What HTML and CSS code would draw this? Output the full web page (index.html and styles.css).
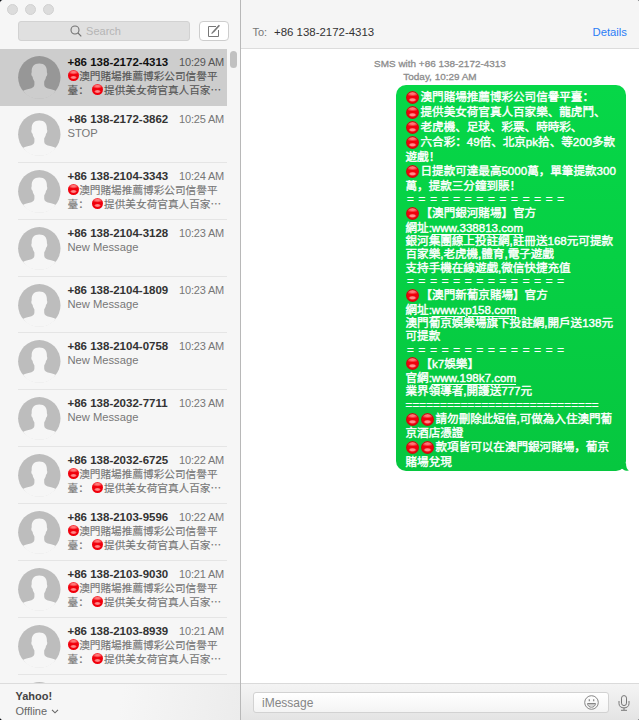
FILE: index.html
```html
<!DOCTYPE html>
<html lang="zh-Hans">
<head>
    <meta charset="utf-8">
    <title>Messages</title>
    <link rel="stylesheet" href="styles.css">
</head>
<body>
    <svg width="0" height="0" class="defs">
        <symbol id="avatar" viewBox="0 0 43 43">
            <circle class="disc" cx="21.3" cy="21.3" r="21.2"/>
            <path class="person" d="M21.3 7.6C26.6 7.6 29.2 10.6 28.9 16.2C29.7 17.4 29.2 20.2 28 20.8C27.7 23.3 26.8 24.4 26.2 25.4V28.4C26.2 31 28.2 31.9 31 32.7C34 33.5 36 34 37.6 34.9C33.6 40.1 27.8 42.8 21.3 42.8C14.8 42.8 9 40.1 5 34.9C6.6 34 8.6 33.5 11.6 32.7C14.4 31.9 16.4 31 16.4 28.4V25.4C15.8 24.4 14.9 23.3 14.6 20.8C13.4 20.2 12.9 17.4 13.7 16.2C13.4 10.6 16 7.6 21.3 7.6Z"/>
        </symbol>
    </svg>
    <div class="window">
        <div class="sidebar">
            <div class="sidebar-top">
                <div class="lights"><i></i><i></i><i></i></div>
                <div class="tools">
                    <div class="search">
                        <svg width="12" height="12" viewBox="0 0 12 12" fill="none" stroke="#727272" stroke-width="1.1"><circle cx="5" cy="5" r="4"/><path d="M8 8L11.3 11.3"/></svg>
                        <span>Search</span>
                    </div>
                    <div class="compose">
                        <svg width="14" height="14" viewBox="0 0 14 14" fill="none" stroke="#777" stroke-width="1"><path d="M9 2.5H1.5V12.5H11.5V6"/><path d="M6 8.2L12.4 1.2" stroke-width="1.7"/><path d="M4.6 9.6L6 8.2" stroke-width="1.2"/></svg>
                    </div>
                </div>
            </div>
            <div class="list-wrap">
                <div class="list" id="list"></div>
                <div class="scrollbar"></div>
            </div>
            <div class="account">
                <div class="account-name">Yahoo!</div>
                <div class="status">Offline <svg width="8" height="5" viewBox="0 0 8 5" fill="none" stroke="#666" stroke-width="1.1"><path d="M1 .8L4 3.8L7 .8"/></svg></div>
            </div>
        </div>

        <div class="chat">
            <div class="chat-header">
                <span class="to">To:</span>
                <span class="recipient">+86 138-2172-4313</span>
                <span class="details">Details</span>
            </div>
            <div class="messages">
                <div class="stamp">SMS with +86 138-2172-4313</div>
                <div class="stamp">Today, 10:29 AM</div>
                <div class="bubble">
                    <div class="line tall"><i class="ball"></i>澳門賭場推薦博彩公司信譽平臺：</div>
                    <div class="line tall"><i class="ball"></i>提供美女荷官真人百家樂、龍虎鬥、</div>
                    <div class="line tall"><i class="ball"></i>老虎機、足球、彩票、時時彩、</div>
                    <div class="line tall"><i class="ball"></i>六合彩：49倍、北京pk拾、等200多款</div>
                    <div class="line mid">遊戲！</div>
                    <div class="line tall"><i class="ball"></i>日提款可達最高5000萬，單筆提款300</div>
                    <div class="line mid">萬，提款三分鐘到賬！</div>
                    <div class="line rule">= = = = = = = = = = = = = =</div>
                    <div class="line title"><i class="ball"></i>【澳門銀河賭場】官方</div>
                    <div class="line mid">網址:<u>www.338813.com</u></div>
                    <div class="line">銀河集團線上投註網,註冊送168元可提款</div>
                    <div class="line">百家樂,老虎機,體育,電子遊戲</div>
                    <div class="line">支持手機在線遊戲,微信快捷充值</div>
                    <div class="line rule">= = = = = = = = = = = = = =</div>
                    <div class="line title"><i class="ball"></i>【澳門新葡京賭場】官方</div>
                    <div class="line mid">網址:<u>www.xp158.com</u></div>
                    <div class="line">澳門葡京娛樂場旗下投註網,開戶送138元</div>
                    <div class="line">可提款</div>
                    <div class="line rule">= = = = = = = = = = = = = =</div>
                    <div class="line title"><i class="ball"></i>【k7娛樂】</div>
                    <div class="line mid">官網:<u>www.198k7.com</u></div>
                    <div class="line">業界領導者,開護送777元</div>
                    <div class="line dashes">============================</div>
                    <div class="line title"><i class="ball"></i><i class="ball"></i>請勿刪除此短信,可做為入住澳門葡</div>
                    <div class="line">京酒店憑證</div>
                    <div class="line title"><i class="ball"></i><i class="ball"></i>款項皆可以在澳門銀河賭場，葡京</div>
                    <div class="line mid">賭場兌現</div>
                    <svg class="tail" width="10" height="8" viewBox="0 0 10 8"><path d="M7 0C7 4 8 6.5 10 7.6C8 8 5.5 7.6 4 6.2L0 4Z" fill="#06c73f"/></svg>
                </div>
            </div>
            <div class="composer">
                <div class="field">
                    <span>iMessage</span>
                    <svg width="15" height="15" viewBox="0 0 15 15" fill="none" stroke="#858585"><circle cx="7.5" cy="7.5" r="6.8"/><path d="M3.5 8.5H11.5C11.2 11 9.6 12.2 7.5 12.2S3.8 11 3.5 8.5Z"/><path d="M4.4 9.9H10.6" stroke-width=".7"/><path d="M5.3 4.2V6.2M9.7 4.2V6.2" stroke-width="1.2"/></svg>
                </div>
                <svg class="mic" width="12" height="16" viewBox="0 0 12 16" fill="none" stroke="#777"><rect x="3.5" y=".6" width="5" height="10" rx="2.5"/><path d="M1 6V8.6C1 11.4 3.2 12.9 6 12.9S11 11.4 11 8.6V6M6 13V15M3 15.3H9"/></svg>
            </div>
        </div>
    </div>

    <script>
        const ad = '<i class="ball"></i>澳門賭場推薦博彩公司信譽平<br>臺：<i class="ball second"></i>提供美女荷官真人百家⋯';
        const threads = [
            ['+86 138-2172-4313', '10:29 AM', ad],
            ['+86 138-2172-3862', '10:25 AM', 'STOP'],
            ['+86 138-2104-3343', '10:24 AM', ad],
            ['+86 138-2104-3128', '10:23 AM', 'New Message'],
            ['+86 138-2104-1809', '10:23 AM', 'New Message'],
            ['+86 138-2104-0758', '10:23 AM', 'New Message'],
            ['+86 138-2032-7711', '10:23 AM', 'New Message'],
            ['+86 138-2032-6725', '10:22 AM', ad],
            ['+86 138-2103-9596', '10:22 AM', ad],
            ['+86 138-2103-9030', '10:21 AM', ad],
            ['+86 138-2103-8939', '10:21 AM', ad],
            ['', '', '']
        ];
        document.getElementById('list').innerHTML = threads.map((t, i) => `
            <div class="thread${i === 0 ? ' selected' : ''}">
                <svg class="avatar"><use href="#avatar"/></svg>
                <div class="info">
                    <div class="top"><b>${t[0]}</b><span>${t[1]}</span></div>
                    <div class="preview">${t[2]}</div>
                </div>
            </div>`).join('');
    </script>
</body>
</html>
```
FILE: styles.css
```css
* {
    box-sizing: border-box;
}
body {
    margin: 0;
    height: 720px;
    overflow: hidden;
    background-color: #15181c;
    font-family: "Liberation Sans", "Noto Sans CJK SC", sans-serif;
    font-size: 11.5px;
    text-spacing-trim: space-all;
}
.defs {
    display: block;
}
.window {
    display: flex;
    width: 639px;
    height: 720px;
    overflow: hidden;
    border-radius: 4px 2px 2px 4px;
    background-color: #fff;
}
.sidebar {
    display: flex;
    flex-direction: column;
    width: 241px;
    background-color: #f6f6f6;
    border-right: 1px solid #b8b8b8;
}
.sidebar-top {
    height: 49px;
    flex: none;
}
.lights {
    display: flex;
    gap: 6.8px;
    padding: 4px 0 0 7px;
}
.lights i {
    width: 11px;
    height: 11px;
    border-radius: 50%;
    background-color: #dcdcdc;
    border: 1px solid #d0d0d0;
}
.tools {
    display: flex;
    gap: 9px;
    padding: 6px 0 0 18px;
}
.search {
    display: flex;
    align-items: center;
    justify-content: center;
    gap: 4px;
    width: 172px;
    height: 20px;
    padding-right: 17px;
    border: 1px solid #d2d2d2;
    border-radius: 3px;
    background-color: #e0e0e0;
    color: #b5b5b5;
    font-size: 11px;
}
.compose {
    display: flex;
    align-items: center;
    justify-content: center;
    width: 30px;
    height: 20px;
    border: 1px solid #cdcdcd;
    border-radius: 4px;
    background-color: #fff;
}
.list-wrap {
    flex: 1;
    display: flex;
    min-height: 0;
    overflow: hidden;
}
.list {
    width: 227px;
}
.scrollbar {
    width: 7px;
    height: 17px;
    margin: 2px 0 0 3px;
    border-radius: 4px;
    background-color: #c1c1c1;
}
.thread {
    display: flex;
    height: 56.9px;
    padding: 7px 0 0 18px;
    color: #777;
    background: linear-gradient(#e5e5e5, #e5e5e5) 18px 100% / 100% 1px no-repeat;
}
.avatar {
    width: 43px;
    height: 43px;
    flex: none;
    fill: #bdbdbd;
    color: #f6f6f6;
}
.person {
    fill: currentColor;
}
.info {
    padding-left: 6.5px;
    margin-top: -1px;
    width: 164px;
}
.top {
    display: flex;
    justify-content: space-between;
    line-height: 14px;
    padding-right: 1px;
    white-space: nowrap;
}
.top b {
    color: #333;
    font-size: 11.5px;
}
.top span {
    font-size: 11px;
    letter-spacing: -0.2px;
}
.preview {
    height: 29px;
    font-size: 11.2px;
    line-height: 14px;
    white-space: nowrap;
}
.preview:has(.ball) {
    font-size: 10.65px;
    -webkit-text-stroke: 0.15px;
}
.thread.selected {
    background: #cdcdcd;
    color: #555;
}
.selected .avatar {
    fill: #979797;
    color: #cdcdcd;
}
.selected b {
    color: #111;
}
.ball {
    display: inline-block;
    width: 11px;
    height: 11px;
    margin-right: 0.7px;
    vertical-align: -1px;
    border-radius: 50%;
    background: radial-gradient(ellipse 32% 16% at 50% 68%, #ff8a8a 50%, transparent), radial-gradient(ellipse 50% 22% at 50% 20%, #f77 30%, transparent), #f0000c;
}
.ball.second {
    margin-left: 3.6px;
}
.account {
    height: 37px;
    flex: none;
    padding: 5px 0 0 15.5px;
    border-top: 1.5px solid #dcdcdc;
    background: linear-gradient(100deg, #f6f6f6 50%, #ececec);
    color: #666;
    font-size: 11px;
    line-height: 14.5px;
}
.account-name {
    font-weight: bold;
    color: #444;
}
.status svg {
    margin-left: 1px;
    vertical-align: 1px;
}
.chat {
    display: flex;
    flex-direction: column;
    width: 398px;
}
.chat-header {
    display: flex;
    height: 49px;
    flex: none;
    padding: 25px 12px 0 11.5px;
    line-height: 14px;
    background-color: #f5f5f5;
    border-bottom: 1px solid #dcdcdc;
}
.to {
    width: 21.5px;
    color: #777;
    font-size: 11px;
}
.recipient {
    color: #333;
    font-size: 11.45px;
}
.details {
    margin-left: auto;
    color: #2b7df6;
    font-size: 11.3px;
}
.messages {
    flex: 1;
    padding-top: 8px;
}
.stamp {
    height: 13px;
    line-height: 13px;
    text-align: center;
    font-size: 9.95px;
    color: #8c8c8c;
    -webkit-text-stroke: 0.3px;
}
.bubble {
    position: relative;
    width: 230px;
    height: 386px;
    margin: 2px 0 0 155px;
    padding: 5px 0 0 9.5px;
    border-radius: 10px;
    background: linear-gradient(#06d748, #06c73f);
    color: #fff;
    font-size: 11.57px;
    -webkit-text-stroke: 0.4px;
}
.line {
    height: 13.5px;
    line-height: 13.5px;
    white-space: pre;
}
.line.tall {
    height: 15px;
    line-height: 15px;
}
.line.mid {
    height: 14px;
    line-height: 14px;
}
.line.title {
    height: 14.5px;
    line-height: 14.5px;
}
.line.rule {
    height: 13px;
    line-height: 13px;
    padding-left: 1.5px;
    word-spacing: 1.6px;
}
.line.dashes {
    letter-spacing: 0.15px;
}
.line u {
    text-underline-offset: 1.5px;
}
.line .ball {
    width: 13px;
    height: 13px;
    margin-right: 2px;
    vertical-align: -2.5px;
    box-shadow: inset 0 0 0 1px #b5140e;
}
.tail {
    position: absolute;
    right: -3px;
    bottom: 0;
}
.composer {
    display: flex;
    align-items: center;
    height: 37px;
    flex: none;
    padding: 1px 9px 0 12px;
    border-top: 1px solid #dadada;
    background: linear-gradient(#f4f4f4, #e4e4e4);
}
.field {
    display: flex;
    align-items: center;
    justify-content: space-between;
    width: 356px;
    height: 21px;
    padding: 0 9px 0 8px;
    border: 1px solid #d2d2d2;
    border-radius: 3px;
    background: linear-gradient(#fff, #f4f4f4);
    color: #858585;
    font-size: 12px;
}
.mic {
    margin-left: auto;
}
```
